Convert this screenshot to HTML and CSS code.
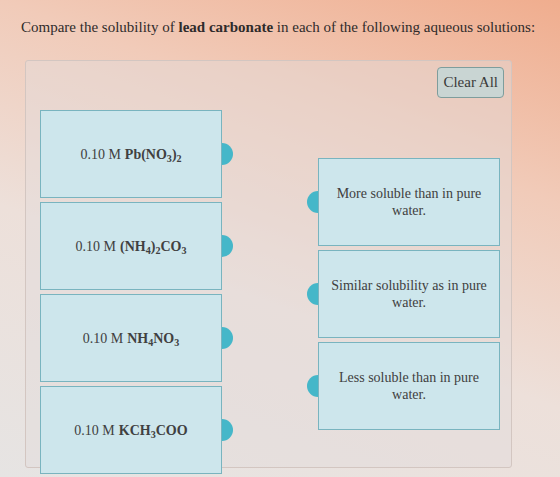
FILE: index.html
```html
<!DOCTYPE html>
<html lang="en">
<head>
    <meta charset="UTF-8">
    <title>Lead carbonate solubility</title>
    <link rel="stylesheet" href="styles.css">
</head>
<body>

    <p class="pregunta">Compare the solubility of <b>lead carbonate</b> in each of the following aqueous solutions:</p>

    <div class="panel">
        <div class="barra">
            <button class="btn-clear">Clear All</button>
        </div>

        <div class="columnas">
            <!-- soluciones (se arrastran) -->
            <div class="col-izq">
                <div class="tarjeta origen">0.10 M <b>Pb(NO<sub>3</sub>)<sub>2</sub></b></div>
                <div class="tarjeta origen">0.10 M <b>(NH<sub>4</sub>)<sub>2</sub>CO<sub>3</sub></b></div>
                <div class="tarjeta origen">0.10 M <b>NH<sub>4</sub>NO<sub>3</sub></b></div>
                <div class="tarjeta origen">0.10 M <b>KCH<sub>3</sub>COO</b></div>
            </div>

            <!-- respuestas -->
            <div class="col-der">
                <div class="tarjeta destino">More soluble than in pure water.</div>
                <div class="tarjeta destino">Similar solubility as in pure water.</div>
                <div class="tarjeta destino">Less soluble than in pure water.</div>
            </div>
        </div>
    </div>

</body>
</html>
```

FILE: styles.css
```css
/* Estilos generales */
body {
    margin: 0;
    min-height: 477px;
    font-family: "Liberation Serif", "Times New Roman", serif;
    color: #2e2a2a;
    background: linear-gradient(200deg, #f0ad8e 0%, #f1cbb9 30%, #ede0da 60%, #e6e4e3 100%);
    overflow: hidden;
}

.pregunta {
    margin: 0;
    padding: 19px 0 0 21px;
    font-size: 15px;
    color: #2f2b2b;
}

.panel {
    margin: 24px 48px 0 25px;
    padding: 6px 7px 0 7px;
    height: 400px;
    border: 1px solid #d3c6c1;
    border-radius: 3px;
    background-color: rgba(226, 220, 219, 0.45);
}

.barra {
    display: flex;
    justify-content: flex-end;
}

.btn-clear {
    font-family: "Liberation Serif", serif;
    font-size: 15px;
    color: #3a3a3a;
    background-color: #c9d5d3;
    border: 1px solid #7e9d9c;
    border-radius: 4px;
    padding: 5px 5px;
    height: 31px;
}

.columnas {
    display: flex;
    margin-top: 12px;
}

.col-izq,
.col-der {
    display: flex;
    flex-direction: column;
    gap: 4px;
}

.col-izq {
    margin-left: 7px;
}

.col-der {
    margin-left: 96px;
    margin-top: 48px;
}

/* Tarjetas */
.tarjeta {
    position: relative;
    box-sizing: border-box;
    width: 182px;
    height: 88px;
    display: flex;
    align-items: center;
    justify-content: center;
    text-align: center;
    padding: 0 10px;
    font-size: 14px;
    line-height: 17px;
    color: #404040;
    background-color: #cde6ec;
    border: 1px solid #79b4bf;
}

.tarjeta b {
    margin-left: 4px;
}

.tarjeta sub {
    font-size: 0.72em;
    line-height: 0;
    vertical-align: -0.3em;
}

/* puntos de conexion */
.tarjeta::after {
    content: "";
    position: absolute;
    top: 50%;
    width: 11px;
    height: 22px;
    margin-top: -11px;
    background-color: #45b7c9;
}

.origen::after {
    right: -12px;
    border-radius: 0 11px 11px 0;
}

.destino::after {
    left: -12px;
    border-radius: 11px 0 0 11px;
}
```
